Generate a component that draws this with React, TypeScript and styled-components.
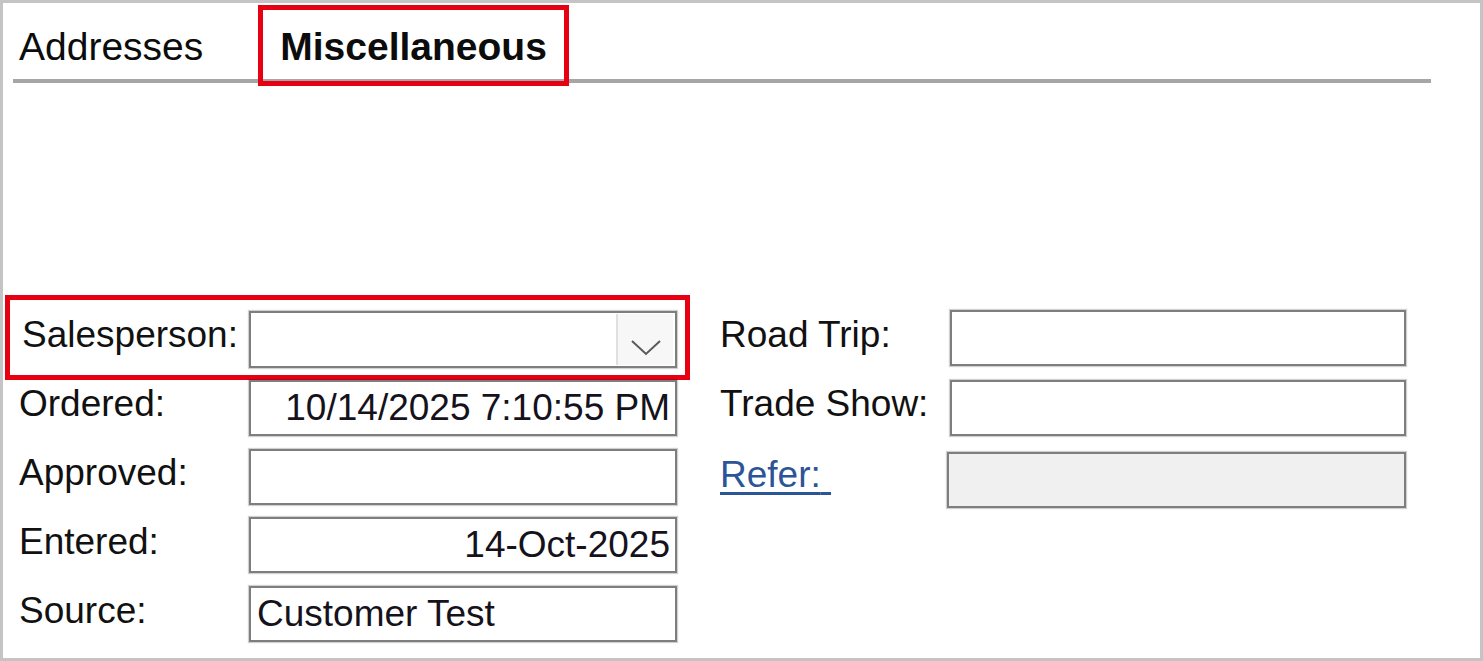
import React from "react";
import styled, { createGlobalStyle } from "styled-components";

const Global = createGlobalStyle`
  html, body { margin: 0; padding: 0; background: #ffffff; }
  body { font-family: "Liberation Sans", Arial, sans-serif; }
  * { box-sizing: border-box; }
`;

const Frame = styled.div`
  width: 1483px;
  height: 661px;
  border: 3px solid #c4c4c4;
  padding: 0 49px 0 10px;
  background: #fff;
  font-family: "Liberation Sans", Arial, sans-serif;
  color: #111;
`;

const TabBar = styled.div`
  display: flex;
  align-items: flex-start;
  height: 80px;
  padding: 7px 0 0 6px;
  gap: 60px;
  border-bottom: 4px solid #a6a6a6;
`;

const Tab = styled.div<{ $active?: boolean }>`
  font-size: 39px;
  line-height: 45px;
  height: 71px;
  padding: 14px ${(p) => (p.$active ? "17px" : "0")} 12px;
  font-weight: ${(p) => (p.$active ? 700 : 400)};
  color: #0c0c0c;
  outline: ${(p) => (p.$active ? "5px solid #e60012" : "none")};
  position: relative;
  z-index: 1;
`;

const FormArea = styled.div`
  display: flex;
  margin-top: 220px;
  gap: 38px;
`;

const Column = styled.div`
  display: flex;
  flex-direction: column;
`;

const Row = styled.div<{ $cols: string; $highlight?: boolean; $pad?: number }>`
  display: grid;
  grid-template-columns: ${(p) => p.$cols};
  align-items: center;
  height: 69px;
  padding: 0 ${(p) => (p.$pad ? 5 : 0)}px 0 ${(p) => p.$pad ?? 0}px;
  outline: ${(p) => (p.$highlight ? "5px solid #e60012" : "none")};
  outline-offset: 3px;
`;

const Label = styled.div<{ $indent?: number }>`
  font-size: 37px;
  line-height: 42px;
  color: #111;
  padding-left: ${(p) => p.$indent ?? 0}px;
  margin-top: -6px;
  white-space: nowrap;
`;

const LinkLabel = styled.a`
  font-size: 37px;
  line-height: 42px;
  color: #2c5597;
  text-decoration: underline;
  text-decoration-thickness: 3px;
  text-underline-offset: 5px;
  margin-top: -2px;
  white-space: pre;
  cursor: pointer;
`;

const Field = styled.div<{ $align?: "left" | "right"; $disabled?: boolean; $shift?: number; $drop?: number }>`
  height: 56px;
  border: 2px solid #7e7e7e;
  box-shadow: 0 0 1px 1px rgba(0, 0, 0, 0.18);
  background: ${(p) => (p.$disabled ? "#f0f0f0" : "#ffffff")};
  font-size: 37px;
  line-height: 52px;
  color: #15121c;
  padding: 0 5px 0 6px;
  text-align: ${(p) => p.$align ?? "left"};
  white-space: nowrap;
  overflow: hidden;
  margin-left: ${(p) => p.$shift ?? 0}px;
  margin-top: ${(p) => p.$drop ?? 0}px;
`;

const Combo = styled.div`
  height: 57px;
  border: 2px solid #7e7e7e;
  box-shadow: 0 0 1px 1px rgba(0, 0, 0, 0.18);
  background: #fff;
  display: flex;
  justify-content: flex-end;
  padding: 1px 2px;
  margin-top: 3px;
`;

const DropButton = styled.div`
  width: 57px;
  background: #f7f7f7;
  border-left: 2px solid #e0e0e0;
  display: flex;
  align-items: flex-end;
  justify-content: center;
  padding-bottom: 9px;
`;

const Chevron = () => (
  <svg width="30" height="16" viewBox="0 0 30 16">
    <polyline points="1,1 15,14 29,1" fill="none" stroke="#5a5a5a" strokeWidth="2" />
  </svg>
);

const LEFT = "230px 428px";
const RIGHT = "230px 456px";

export default function App() {
  return (
    <>
      <Global />
      <Frame>
        <TabBar>
          <Tab>Addresses</Tab>
          <Tab $active>Miscellaneous</Tab>
        </TabBar>
        <FormArea>
          <Column>
            <Row $cols={LEFT} $highlight $pad={6}>
              <Label $indent={3}>Salesperson:</Label>
              <Combo>
                <DropButton>
                  <Chevron />
                </DropButton>
              </Combo>
            </Row>
            <Row $cols={LEFT} $pad={6}>
              <Label>Ordered:</Label>
              <Field $align="right" $drop={3}>10/14/2025 7:10:55 PM</Field>
            </Row>
            <Row $cols={LEFT} $pad={6}>
              <Label>Approved:</Label>
              <Field $drop={2}></Field>
            </Row>
            <Row $cols={LEFT} $pad={6}>
              <Label>Entered:</Label>
              <Field $align="right" $drop={1}>14-Oct-2025</Field>
            </Row>
            <Row $cols={LEFT} $pad={6}>
              <Label>Source:</Label>
              <Field $drop={1}>Customer Test</Field>
            </Row>
          </Column>
          <Column>
            <Row $cols={RIGHT}>
              <Label>Road Trip:</Label>
              <Field $drop={1}></Field>
            </Row>
            <Row $cols={RIGHT}>
              <Label>Trade Show:</Label>
              <Field $drop={3}></Field>
            </Row>
            <Row $cols={RIGHT}>
              <LinkLabel>Refer:{"\u00a0"}</LinkLabel>
              <Field $disabled $shift={-3} $drop={8}></Field>
            </Row>
          </Column>
        </FormArea>
      </Frame>
    </>
  );
}
